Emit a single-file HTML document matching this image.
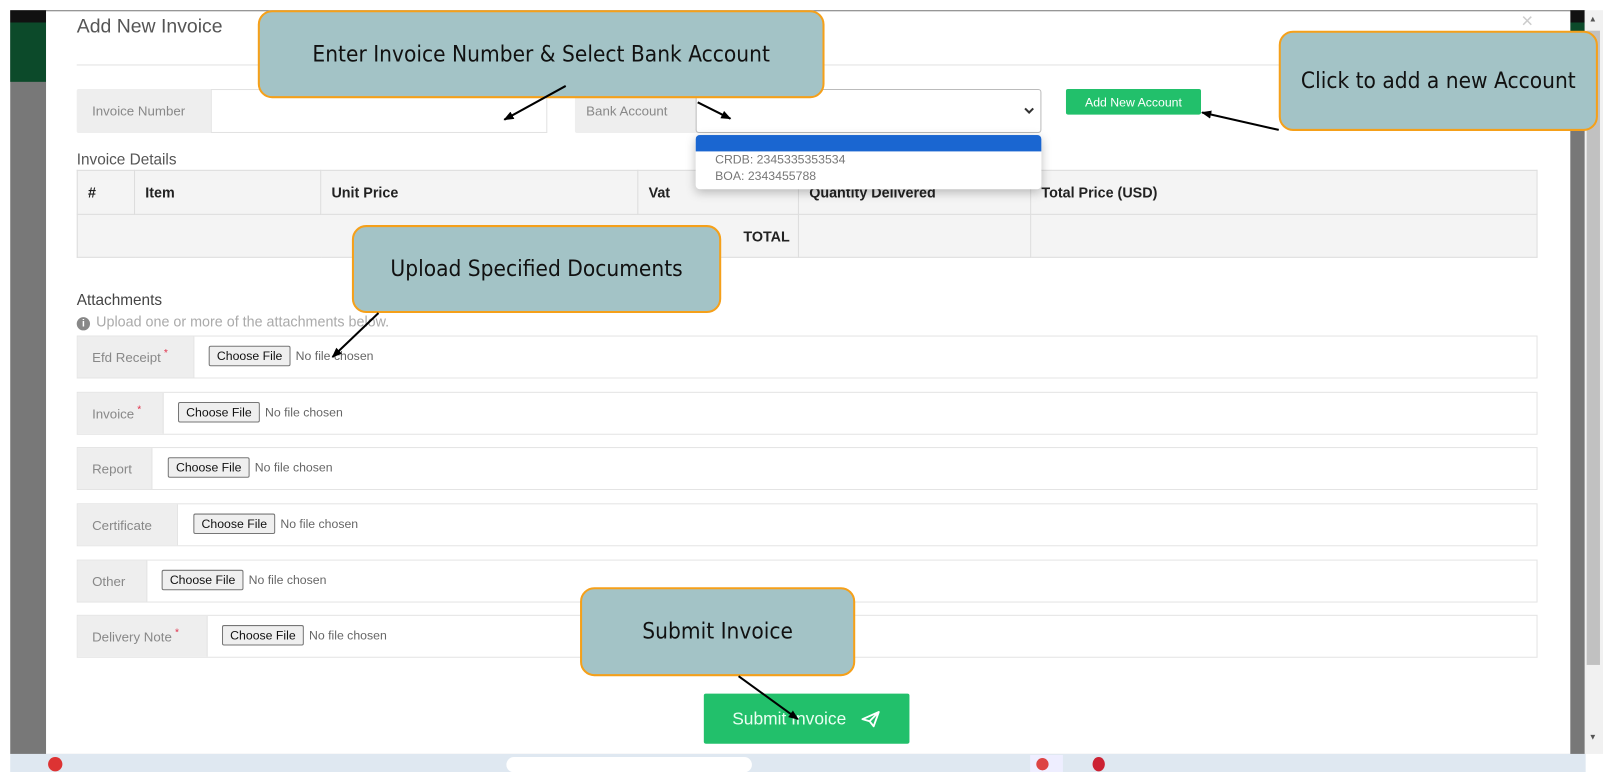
<!DOCTYPE html>
<html><head><meta charset="utf-8"><style>
*{box-sizing:border-box;margin:0;padding:0}
html,body{width:1603px;height:772px;overflow:hidden;background:#fff;font-family:"Liberation Sans",sans-serif}
#w{position:absolute;left:0;top:0;width:1567px;height:755px;transform:scale(1.023);transform-origin:0 0}
.a{position:absolute}
.lbl{position:absolute;background:#eee;color:#888;font-size:13px;display:flex;align-items:center;padding-left:15px;border-radius:2px 0 0 2px}
.row{position:absolute;left:75px;width:1428px;height:42px;background:#fff;border:1px solid #e4e4e4}
.row .l{position:absolute;left:0;top:0;bottom:0;background:#eee;color:#888;font-size:13px;display:flex;align-items:center;padding-left:14px;border-right:1px solid #e4e4e4}
.row .l b{color:#e0304a;font-weight:normal;font-size:10px;margin-left:3px;position:relative;top:-4px}
.row .f{position:absolute;top:9px;font-size:12px;color:#666;display:flex;align-items:center}
.cf{display:inline-block;border:1px solid #767676;background:#efefef;color:#111;font-size:12px;padding:2px 7px;border-radius:2px;margin-right:5px}
.co{position:absolute;background:#a3c3c6;border:2px solid #f5a01a;border-radius:14px;display:flex;align-items:center;justify-content:center;font-family:"DejaVu Sans Condensed","DejaVu Sans",sans-serif;font-stretch:condensed;font-size:22px;color:#111}
th,td{border:1px solid #ddd}
</style></head><body><div id="w">
<div class="a" style="left:10px;top:10px;width:1540px;height:727px;background:#787878"></div>
<div class="a" style="left:10px;top:10px;width:35px;height:12px;background:#111"></div>
<div class="a" style="left:10px;top:22px;width:35px;height:58px;background:#0c4a2a"></div>
<div class="a" style="left:1535px;top:10px;width:14px;height:12px;background:#111"></div>
<div class="a" style="left:1535px;top:22px;width:14px;height:10px;background:#0c4a2a"></div>
<div class="a" style="left:1549px;top:10px;width:18px;height:727px;background:#f1f1f1"></div>
<div class="a" style="left:1551px;top:30px;width:13px;height:620px;background:#c1c1c1"></div>
<div class="a" style="left:1553px;top:14px;font-size:8px;color:#555">▲</div>
<div class="a" style="left:1553px;top:716px;font-size:8px;color:#555">▼</div>
<div class="a" style="left:45px;top:11px;width:1490px;height:726px;background:#fff"></div>
<div class="a" style="left:75px;top:16px;font-size:19px;color:#555">Add New Invoice</div>
<div class="a" style="left:1487px;top:10px;font-size:20px;color:#ccc">×</div>
<div class="a" style="left:75px;top:63px;width:1430px;height:1px;background:#e2e2e2"></div>
<div class="lbl" style="left:75px;top:87px;width:132px;height:43px">Invoice Number</div>
<div class="a" style="left:206px;top:87px;width:329px;height:43px;border:1px solid #e2e2e2;background:#fff"></div>
<div class="lbl" style="left:562px;top:87px;width:120px;height:43px;padding-left:11px">Bank Account</div>
<div class="a" style="left:680px;top:87px;width:338px;height:43px;border:1px solid #bbb;border-radius:3px;background:#fff"></div>
<svg class="a" style="left:1000px;top:103px" width="12" height="10"><path d="M2 3l4 4 4-4" stroke="#333" stroke-width="2" fill="none"/></svg>
<div class="a" style="left:1042px;top:87px;width:132px;height:25px;background:#22c06b;border-radius:2px;color:#fff;font-size:12px;display:flex;align-items:center;justify-content:center">Add New Account</div>
<div class="a" style="left:75px;top:148px;font-size:15px;color:#555">Invoice Details</div>
<table class="a" style="left:75px;top:166px;width:1428px;border-collapse:collapse;background:#f4f4f4;font-size:14px;font-weight:bold;color:#222">
<tr style="height:43px"><td style="width:56px;padding-left:10px">#</td><td style="width:182px;padding-left:10px">Item</td><td style="width:310px;padding-left:10px">Unit Price</td><td style="width:157px;padding-left:10px">Vat</td><td style="width:227px;padding-left:10px">Quantity Delivered</td><td style="padding-left:10px">Total Price (USD)</td></tr>
<tr style="height:42px"><td colspan="4" style="text-align:right;padding-right:8px">TOTAL</td><td></td><td></td></tr>
</table>
<div class="a" style="left:680px;top:132px;width:338px;height:53px;background:#fff;border-radius:4px;box-shadow:0 3px 10px rgba(0,0,0,.25);overflow:hidden;font-size:12px;color:#777">
<div style="height:16px;background:#1a66d1"></div>
<div style="padding-left:19px;line-height:16px">CRDB: 2345335353534</div>
<div style="padding-left:19px;line-height:16px">BOA: 2343455788</div>
</div>
<div class="a" style="left:75px;top:285px;font-size:15px;color:#444">Attachments</div>
<div class="a" style="left:75px;top:306px;font-size:14px;color:#aaa"><span style="display:inline-block;width:13px;height:13px;border-radius:50%;background:#888;color:#fff;font-size:10px;text-align:center;line-height:13px;font-weight:bold;margin-right:6px">i</span>Upload one or more of the attachments below.</div>
<div class="row" style="top:328px"><div class="l" style="width:114px">Efd Receipt<b>*</b></div><div class="f" style="left:128px"><span class="cf">Choose File</span>No file chosen</div></div>
<div class="row" style="top:383px"><div class="l" style="width:84px">Invoice<b>*</b></div><div class="f" style="left:98px"><span class="cf">Choose File</span>No file chosen</div></div>
<div class="row" style="top:437px"><div class="l" style="width:73px">Report</div><div class="f" style="left:88px"><span class="cf">Choose File</span>No file chosen</div></div>
<div class="row" style="top:492px"><div class="l" style="width:98px">Certificate</div><div class="f" style="left:113px"><span class="cf">Choose File</span>No file chosen</div></div>
<div class="row" style="top:547px"><div class="l" style="width:68px">Other</div><div class="f" style="left:82px"><span class="cf">Choose File</span>No file chosen</div></div>
<div class="row" style="top:601px"><div class="l" style="width:127px">Delivery Note<b>*</b></div><div class="f" style="left:141px"><span class="cf">Choose File</span>No file chosen</div></div>
<div class="a" style="left:688px;top:678px;width:201px;height:49px;background:#22c06b;border-radius:2px;color:#eafff2;font-size:17px;display:flex;align-items:center;justify-content:center">Submit Invoice
<svg width="20" height="18" style="margin-left:14px" viewBox="0 0 20 18"><path d="M2 9L18 2 13 16 9 11z M9 11L18 2" stroke="#fff" stroke-width="1.8" fill="none" stroke-linejoin="round"/></svg></div>
<div class="a" style="left:10px;top:737px;width:1540px;height:18px;background:#dfe8f1"></div>
<div class="a" style="left:47px;top:740px;width:14px;height:14px;border-radius:50%;background:#d33"></div>
<div class="a" style="left:495px;top:740px;width:240px;height:15px;border-radius:8px;background:#fff"></div>
<div class="a" style="left:1007px;top:738px;width:32px;height:17px;background:#eef;"></div>
<div class="a" style="left:1013px;top:741px;width:12px;height:12px;border-radius:50%;background:#d44"></div>
<div class="a" style="left:1068px;top:740px;width:12px;height:14px;border-radius:50%;background:#c23"></div>
<div class="co" style="left:252px;top:10px;width:554px;height:86px">Enter Invoice Number &amp; Select Bank Account</div>
<div class="co" style="left:1250px;top:30px;width:312px;height:98px">Click to add a new Account</div>
<div class="co" style="left:344px;top:220px;width:361px;height:86px">Upload Specified Documents</div>
<div class="co" style="left:567px;top:574px;width:269px;height:87px">Submit Invoice</div>
<svg class="a" style="left:0;top:0" width="1567" height="755">
<defs><marker id="m" markerWidth="10" markerHeight="8" refX="9" refY="4" orient="auto" markerUnits="userSpaceOnUse"><path d="M0 0L10 4 0 8z" fill="#000"/></marker></defs>
<g stroke="#000" stroke-width="2" marker-end="url(#m)" fill="none">
<line x1="553" y1="84" x2="493" y2="117"/>
<line x1="682" y1="100" x2="714" y2="116"/>
<line x1="1250" y1="127" x2="1175" y2="110"/>
<line x1="370" y1="306" x2="325" y2="349"/>
<line x1="722" y1="661" x2="780" y2="703"/>
</g></svg>
</div></body></html>
